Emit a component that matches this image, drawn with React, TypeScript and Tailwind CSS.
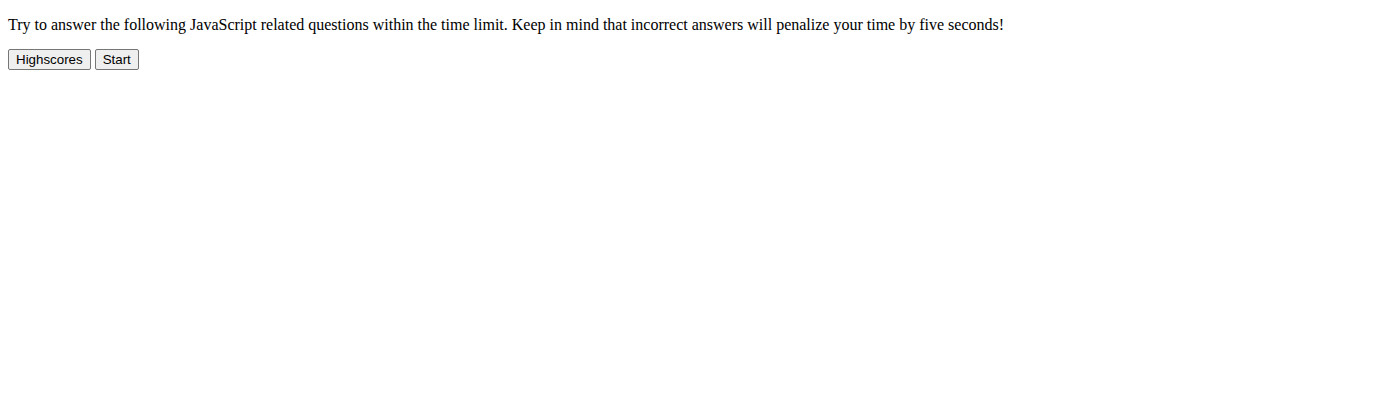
export default function App() {
  return (
    <div className="m-2 bg-white text-black font-['Liberation_Serif',serif] text-base">
      <p className="mt-4 mb-[15px] leading-[18px]">
        Try to answer the following JavaScript related questions within the time limit. Keep in mind that incorrect answers will penalize your time by five seconds!
      </p>
      <div className="flex gap-1">
        <button className="h-[21px] px-[7px] bg-[#efefef] border border-[#767676] rounded-[2px] text-[13.33px] leading-[17px] font-['Liberation_Sans',sans-serif] text-black hover:bg-[#e5e5e5]">
          Highscores
        </button>
        <button className="h-[21px] px-[7px] bg-[#efefef] border border-[#767676] rounded-[2px] text-[13.33px] leading-[17px] font-['Liberation_Sans',sans-serif] text-black hover:bg-[#e5e5e5]">
          Start
        </button>
      </div>
    </div>
  );
}
